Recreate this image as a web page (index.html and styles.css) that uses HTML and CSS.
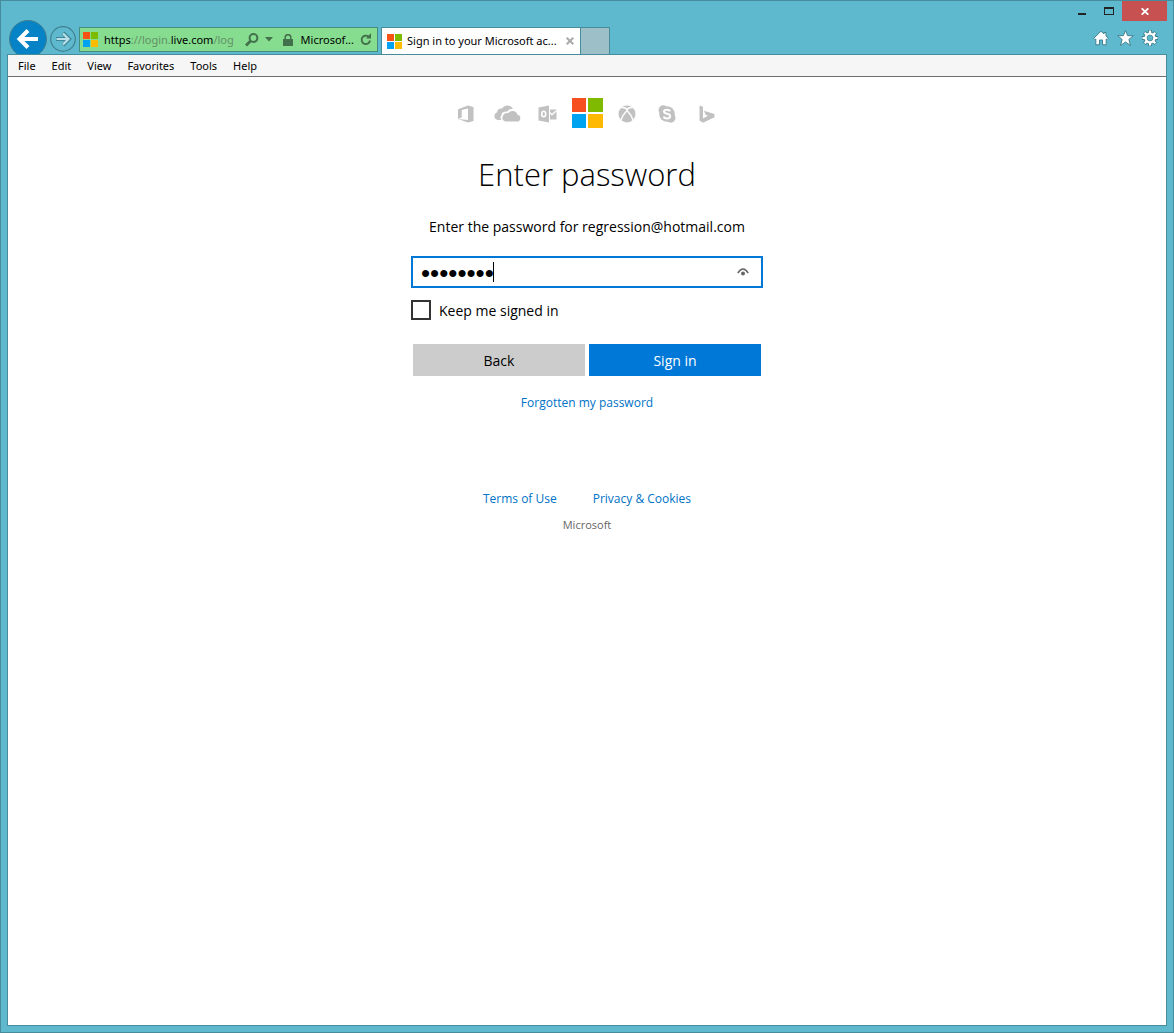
FILE: index.html
```html
<!DOCTYPE html>
<html lang="en">
<head>
<meta charset="utf-8">
<meta name="viewport" content="width=device-width, initial-scale=1">
<title>Sign in to your Microsoft account</title>
<link rel="stylesheet" href="styles.css">
</head>
<body>
<div class="window">
  <header class="chrome">
    <div class="navigation">
      <button class="icon-button" type="button" aria-label="Back">
        <svg width="38" height="34" viewBox="0 0 38 34"><circle cx="19" cy="19" r="18.5" fill="#0683c6" stroke="#3f7f8f"/><path d="M29 19H11M19 10.500L10.500 19L19 27.500" fill="none" stroke="#fff" stroke-width="4"/></svg>
      </button>
      <button class="icon-button forward" type="button" aria-label="Forward">
        <svg width="26" height="26" viewBox="0 0 26 26"><circle cx="13" cy="13" r="12.300" fill="#5fb9ce" stroke="#41818f" stroke-width="1.200"/><path d="M6 13H18M13 7L19 13L13 19" fill="none" stroke="#3f8797" stroke-width="4"/><path d="M6.500 13H18M13 7.500L18.500 13L13 18.500" fill="none" stroke="#b9dfe8" stroke-width="2.200"/></svg>
      </button>
      <div class="address">
        <svg width="15" height="15" viewBox="0 0 15 15"><path fill="#f65314" d="M0 0h7v7H0z"/><path fill="#7cbb00" d="M8 0h7v7H8z"/><path fill="#00a1f1" d="M0 8h7v7H0z"/><path fill="#ffbb00" d="M8 8h7v7H8z"/></svg>
        <span class="url">https<span class="dim">://login.</span>live.com<span class="dim">/log</span></span>
        <button class="icon-button" type="button" aria-label="Search">
          <svg width="14" height="14" viewBox="0 0 14 14"><circle cx="8.500" cy="5" r="3.900" fill="none" stroke="#43714b" stroke-width="2"/><path d="M5.500 8L1 12.500" stroke="#43714b" stroke-width="2.800"/></svg>
        </button>
        <button class="icon-button" type="button" aria-label="Show addresses">
          <svg width="8" height="5" viewBox="0 0 8 5"><path d="M0 0H8L4 4.500z" fill="#43714b"/></svg>
        </button>
        <button class="identity" type="button">
          <svg width="10" height="12" viewBox="0 0 10 12"><path d="M2.200 6V3.500a2.800 2.800 0 0 1 5.600 0V6" fill="none" stroke="#43714b" stroke-width="1.500"/><path d="M0 5h10v7H0z" fill="#43714b"/></svg>
          <span>Microsof...</span>
        </button>
        <button class="icon-button" type="button" aria-label="Refresh">
          <svg width="12" height="13" viewBox="0 0 12 13"><path d="M8.500 3.600A4.200 4.200 0 1 0 10 7.500" fill="none" stroke="#43714b" stroke-width="1.900"/><path d="M6 5.500H11V0z" fill="#43714b"/></svg>
        </button>
      </div>
      <div class="tabs">
        <div class="tab">
          <svg width="15" height="15" viewBox="0 0 15 15"><path fill="#f65314" d="M0 0h7v7H0z"/><path fill="#7cbb00" d="M8 0h7v7H8z"/><path fill="#00a1f1" d="M0 8h7v7H0z"/><path fill="#ffbb00" d="M8 8h7v7H8z"/></svg>
          <span class="tab-title">Sign in to your Microsoft ac...</span>
          <button class="icon-button" type="button" aria-label="Close tab">
            <svg width="8" height="8" viewBox="0 0 8 8"><path d="M.7.7L7.300 7.300M7.300.7L.7 7.300" stroke="#aaa" stroke-width="2"/></svg>
          </button>
        </div>
        <button class="new-tab" type="button" aria-label="New tab"></button>
      </div>
    </div>
    <div class="controls">
      <div class="window-buttons">
        <button class="icon-button" type="button" aria-label="Minimize">
          <svg width="8" height="10" viewBox="0 0 8 10"><path d="M0 7h8v2H0z" fill="#222"/></svg>
        </button>
        <button class="icon-button" type="button" aria-label="Maximize">
          <svg width="10" height="8" viewBox="0 0 10 8"><path d="M0 0h10v8H0zM1 2v5h8V2z" fill="#222" fill-rule="evenodd"/></svg>
        </button>
        <button class="close" type="button" aria-label="Close">
          <svg width="8" height="7" viewBox="0 0 8 7"><path d="M.7.300L7.300 6.700M7.300.300L.7 6.700" stroke="#fff" stroke-width="1.800"/></svg>
        </button>
      </div>
      <div class="tools">
        <button class="icon-button" type="button" aria-label="Home">
          <svg width="16" height="16" viewBox="0 0 16 16"><path d="M8 1.200L11 4V2.500h2v3.300L15.300 8.300L14 9.700L13.200 9V14.800H9.500V10H6.500V14.800H2.800V9L2 9.700L.7 8.300z" fill="#fff" stroke="#41818f" stroke-width="1"/></svg>
        </button>
        <button class="icon-button" type="button" aria-label="Favorites">
          <svg width="17" height="16" viewBox="0 0 17 16"><path d="M8.500 .500L10.700 5.700H16.300L11.900 9.400L13.500 15.500L8.500 12L3.500 15.500L5.100 9.400L.700 5.700H6.300z" fill="#fff" stroke="#41818f" stroke-width="1"/></svg>
        </button>
        <button class="icon-button" type="button" aria-label="Settings">
          <svg width="16" height="16" viewBox="0 0 16 16"><g fill="none" stroke="#41818f"><circle cx="8" cy="8" r="4.500" stroke-width="4"/><path d="M8 0V16M0 8H16M2.300 2.300L13.700 13.700M13.700 2.300L2.300 13.700" stroke-width="4"/></g><g fill="none" stroke="#fff"><path d="M8 .500V15.500M.500 8H15.500M2.700 2.700L13.300 13.300M13.300 2.700L2.700 13.300" stroke-width="2.200"/><circle cx="8" cy="8" r="4.300" stroke-width="2.400"/></g><circle cx="8" cy="8" r="2.900" fill="#5fb9ce" stroke="#41818f" stroke-width=".8"/></svg>
        </button>
      </div>
    </div>
  </header>
  <div class="viewport">
    <nav class="menu" aria-label="Menu bar">
      <button type="button">File</button>
      <button type="button">Edit</button>
      <button type="button">View</button>
      <button type="button">Favorites</button>
      <button type="button">Tools</button>
      <button type="button">Help</button>
    </nav>
    <main class="page">
      <div class="brands">
        <svg width="18" height="18" viewBox="0 0 18 18"><path d="M0 4.200L10 .400L15.500 2V16L10 17.600L0 14L10 15V3.400L3.700 5V12.600L0 14z" fill="#c1c1c1"/></svg>
        <svg width="27" height="17" viewBox="0 0 27 17"><path d="M7.500 15H4A4 4 0 0 1 3 7.300A4.600 4.600 0 0 1 8 3.500A6.500 6.500 0 0 1 19 3.700Q15 3.400 13.300 6.600Q7.500 6.300 7.200 10.700Q5.500 13 7.500 15z" fill="#c1c1c1"/><path d="M12 16.500A3.500 3.500 0 0 1 9 11A4 4 0 0 1 14.200 8.300A5.200 5.200 0 0 1 23.500 9.800A3.400 3.400 0 0 1 23.500 16.500z" fill="#c1c1c1"/></svg>
        <svg width="19" height="18" viewBox="0 0 19 18"><path d="M.500 2.600L11 .500V17.500L.500 15.400z" fill="#c1c1c1"/><ellipse cx="5.700" cy="9" rx="2" ry="2.700" fill="none" stroke="#fff" stroke-width="1.600"/><path d="M12 4.500h6.500v10H12z" fill="#c1c1c1"/><path d="M12 7.500L14 9.800L18.500 5.500" fill="none" stroke="#fff" stroke-width="1.200"/></svg>
        <svg width="31" height="31" viewBox="0 0 31 31"><path fill="#f65021" d="M0 0h14v14H0z"/><path fill="#7fba00" d="M16 0h15v14H16z"/><path fill="#00a3f0" d="M0 16h14v14H0z"/><path fill="#ffb902" d="M16 16h15v14H16z"/></svg>
        <svg width="18" height="18" viewBox="0 0 18 18"><circle cx="9" cy="9" r="8.500" fill="#c1c1c1"/><path d="M3.500 2.700Q6.500 2 9 4.300Q11.500 2 14.500 2.700" fill="none" stroke="#fff" stroke-width="1.600"/><path d="M2.800 15.500Q4.500 10 9 5.500Q13.500 10 15.200 15.500" fill="none" stroke="#fff" stroke-width="1.400"/></svg>
        <svg width="18" height="18" viewBox="0 0 18 18"><circle cx="9" cy="9" r="7.800" fill="#c1c1c1"/><circle cx="5.200" cy="5" r="4.700" fill="#c1c1c1"/><circle cx="12.800" cy="13" r="4.700" fill="#c1c1c1"/><path d="M12 6.400Q11.500 4.700 9 4.700Q6 4.700 6 6.600Q6 8.200 9 8.800Q12.200 9.400 12.200 11.300Q12.200 13.400 9 13.400Q6.200 13.400 5.700 11.500" fill="none" stroke="#fff" stroke-width="2"/></svg>
        <svg width="16" height="18" viewBox="0 0 16 18"><path d="M.500.500L4 1.700V13.500L9 10.800L6.700 9.700L5 5.700L15.500 9V12.300L4 17.700L.500 15.500z" fill="#c1c1c1"/></svg>
      </div>
      <h1>Enter password</h1>
      <form class="sign-in">
        <p class="prompt">Enter the password for regression@hotmail.com</p>
        <div class="password">
          <input type="password" value="password" aria-label="Password">
          <span class="caret"></span>
          <button class="icon-button reveal" type="button" aria-label="Show password">
            <svg width="12" height="8" viewBox="0 0 12 8"><path d="M.8 5Q6-2.800 11.200 5" fill="none" stroke="#666" stroke-width="1.500"/><circle cx="6" cy="5.400" r="2" fill="#666"/></svg>
          </button>
        </div>
        <label class="keep"><input type="checkbox"><span>Keep me signed in</span></label>
        <div class="actions">
          <button class="back" type="button">Back</button>
          <button class="submit" type="submit">Sign in</button>
        </div>
        <a class="forgotten" href="#">Forgotten my password</a>
      </form>
      <footer>
        <div class="legal">
          <a href="#">Terms of Use</a>
          <a href="#">Privacy &amp; Cookies</a>
        </div>
        <p>Microsoft</p>
      </footer>
    </main>
  </div>
</div>
</body>
</html>
```

FILE: styles.css
```css
* {
  box-sizing: border-box;
}

body {
  margin: 0;
  font-family: "Open Sans", "Noto Sans", sans-serif;
  font-size: 14px;
  line-height: 20px;
  color: #000;
}

button,
input {
  font: inherit;
  color: inherit;
}

button {
  padding: 0;
  border: 0;
  background: none;
}

svg {
  display: block;
  flex: none;
}

h1,
p {
  margin: 0;
  font-weight: 400;
}

a {
  color: #0072c6;
  text-decoration: none;
}

.window {
  display: flex;
  flex-direction: column;
  min-height: 100vh;
  padding: 0 6px 6px;
  border: 1px solid #468c9b;
  background: #5fb9ce;
}

.icon-button {
  flex: none;
}

/* Browser chrome */

.chrome {
  display: flex;
  justify-content: space-between;
  font-family: "Noto Sans", "Open Sans", sans-serif;
  font-size: 11px;
}

.navigation {
  display: flex;
  align-items: flex-end;
  padding: 19px 0 0 2px;
}

.forward {
  margin: 0 3px 2px;
}

.address {
  display: flex;
  align-items: center;
  gap: 6px;
  width: 299px;
  height: 25px;
  margin: 0 3px 2px 0;
  padding: 0 5px 0 3px;
  border: 1px solid #468c7d;
  background: #86dd8f;
}

.url {
  flex: 1;
  white-space: nowrap;
}

.dim {
  color: #648f68;
}

.identity {
  display: flex;
  align-items: center;
  gap: 8px;
  margin-left: 4px;
}

.tabs {
  display: flex;
  height: 27px;
  border: solid #468c9b;
  border-width: 1px 1px 0;
}

.tab {
  display: flex;
  align-items: center;
  gap: 5px;
  width: 199px;
  padding: 0 6px 0 5px;
  border-right: 1px solid #468c9b;
  background: #fff;
}

.tab-title {
  flex: 1;
  white-space: nowrap;
}

.new-tab {
  width: 28px;
  background: #9dc0c8;
}

.controls {
  display: flex;
  flex-direction: column;
  align-items: flex-end;
}

.window-buttons {
  display: flex;
  align-items: center;
}

.window-buttons .icon-button {
  padding: 0 8px 0 10px;
}

.window-buttons .close {
  display: grid;
  place-items: center;
  width: 45px;
  height: 20px;
  background: #c75050;
}

.tools {
  display: flex;
  gap: 8px;
  padding: 9px 9px 0 0;
}

.viewport {
  display: flex;
  flex: 1;
  flex-direction: column;
  border: 1px solid #468c9b;
  background: #fff;
}

.menu {
  display: flex;
  gap: 16px;
  padding: 1px 10px 0;
  border-bottom: 1px solid #6e6e6e;
  background: #f6f6f6;
  font-family: "Noto Sans", "Open Sans", sans-serif;
  font-size: 11px;
}

/* Sign-in page */

.page {
  display: flex;
  flex-direction: column;
  align-items: center;
  padding: 21px 16px;
}

.brands {
  display: grid;
  grid-template-columns: repeat(7, 40px);
  place-items: center;
}

h1 {
  margin-top: 21px;
  font-size: 31px;
  font-weight: 300;
  line-height: 48px;
}

.sign-in {
  display: flex;
  flex-direction: column;
  width: 100%;
  max-width: 352px;
  margin-top: 19px;
}

.prompt {
  text-align: center;
  white-space: nowrap;
}

.password {
  position: relative;
  margin: 19px 0 12px;
}

.password input {
  display: block;
  width: 100%;
  height: 32px;
  padding: 2px 32px 0 8px;
  border: 2px solid #0078d7;
  outline: 0;
  background: #fff;
  font-family: "Liberation Sans", sans-serif;
  font-size: 26px;
}

.caret {
  position: absolute;
  top: 6px;
  left: 82px;
  width: 1px;
  height: 20px;
  background: #000;
}

.reveal {
  position: absolute;
  top: 12px;
  right: 14px;
}

.keep {
  display: flex;
  gap: 8px;
  height: 20px;
  line-height: 22px;
}

.keep input {
  width: 20px;
  height: 20px;
  margin: 0;
  border: 2px solid #333;
  appearance: none;
}

.actions {
  display: grid;
  grid-template-columns: 1fr 1fr;
  gap: 4px;
  margin: 24px 2px 17px;
}

.actions button {
  height: 32px;
  padding-top: 2px;
}

.back {
  background: #ccc;
}

.actions .submit {
  background: #0078d7;
  color: #fff;
}

.forgotten,
.legal {
  font-size: 12px;
}

.forgotten {
  align-self: center;
}

footer {
  margin-top: 76px;
  text-align: center;
}

.legal {
  display: flex;
  gap: 36px;
  margin-bottom: 6px;
}

footer p {
  font-size: 11px;
  color: #666;
}
```
